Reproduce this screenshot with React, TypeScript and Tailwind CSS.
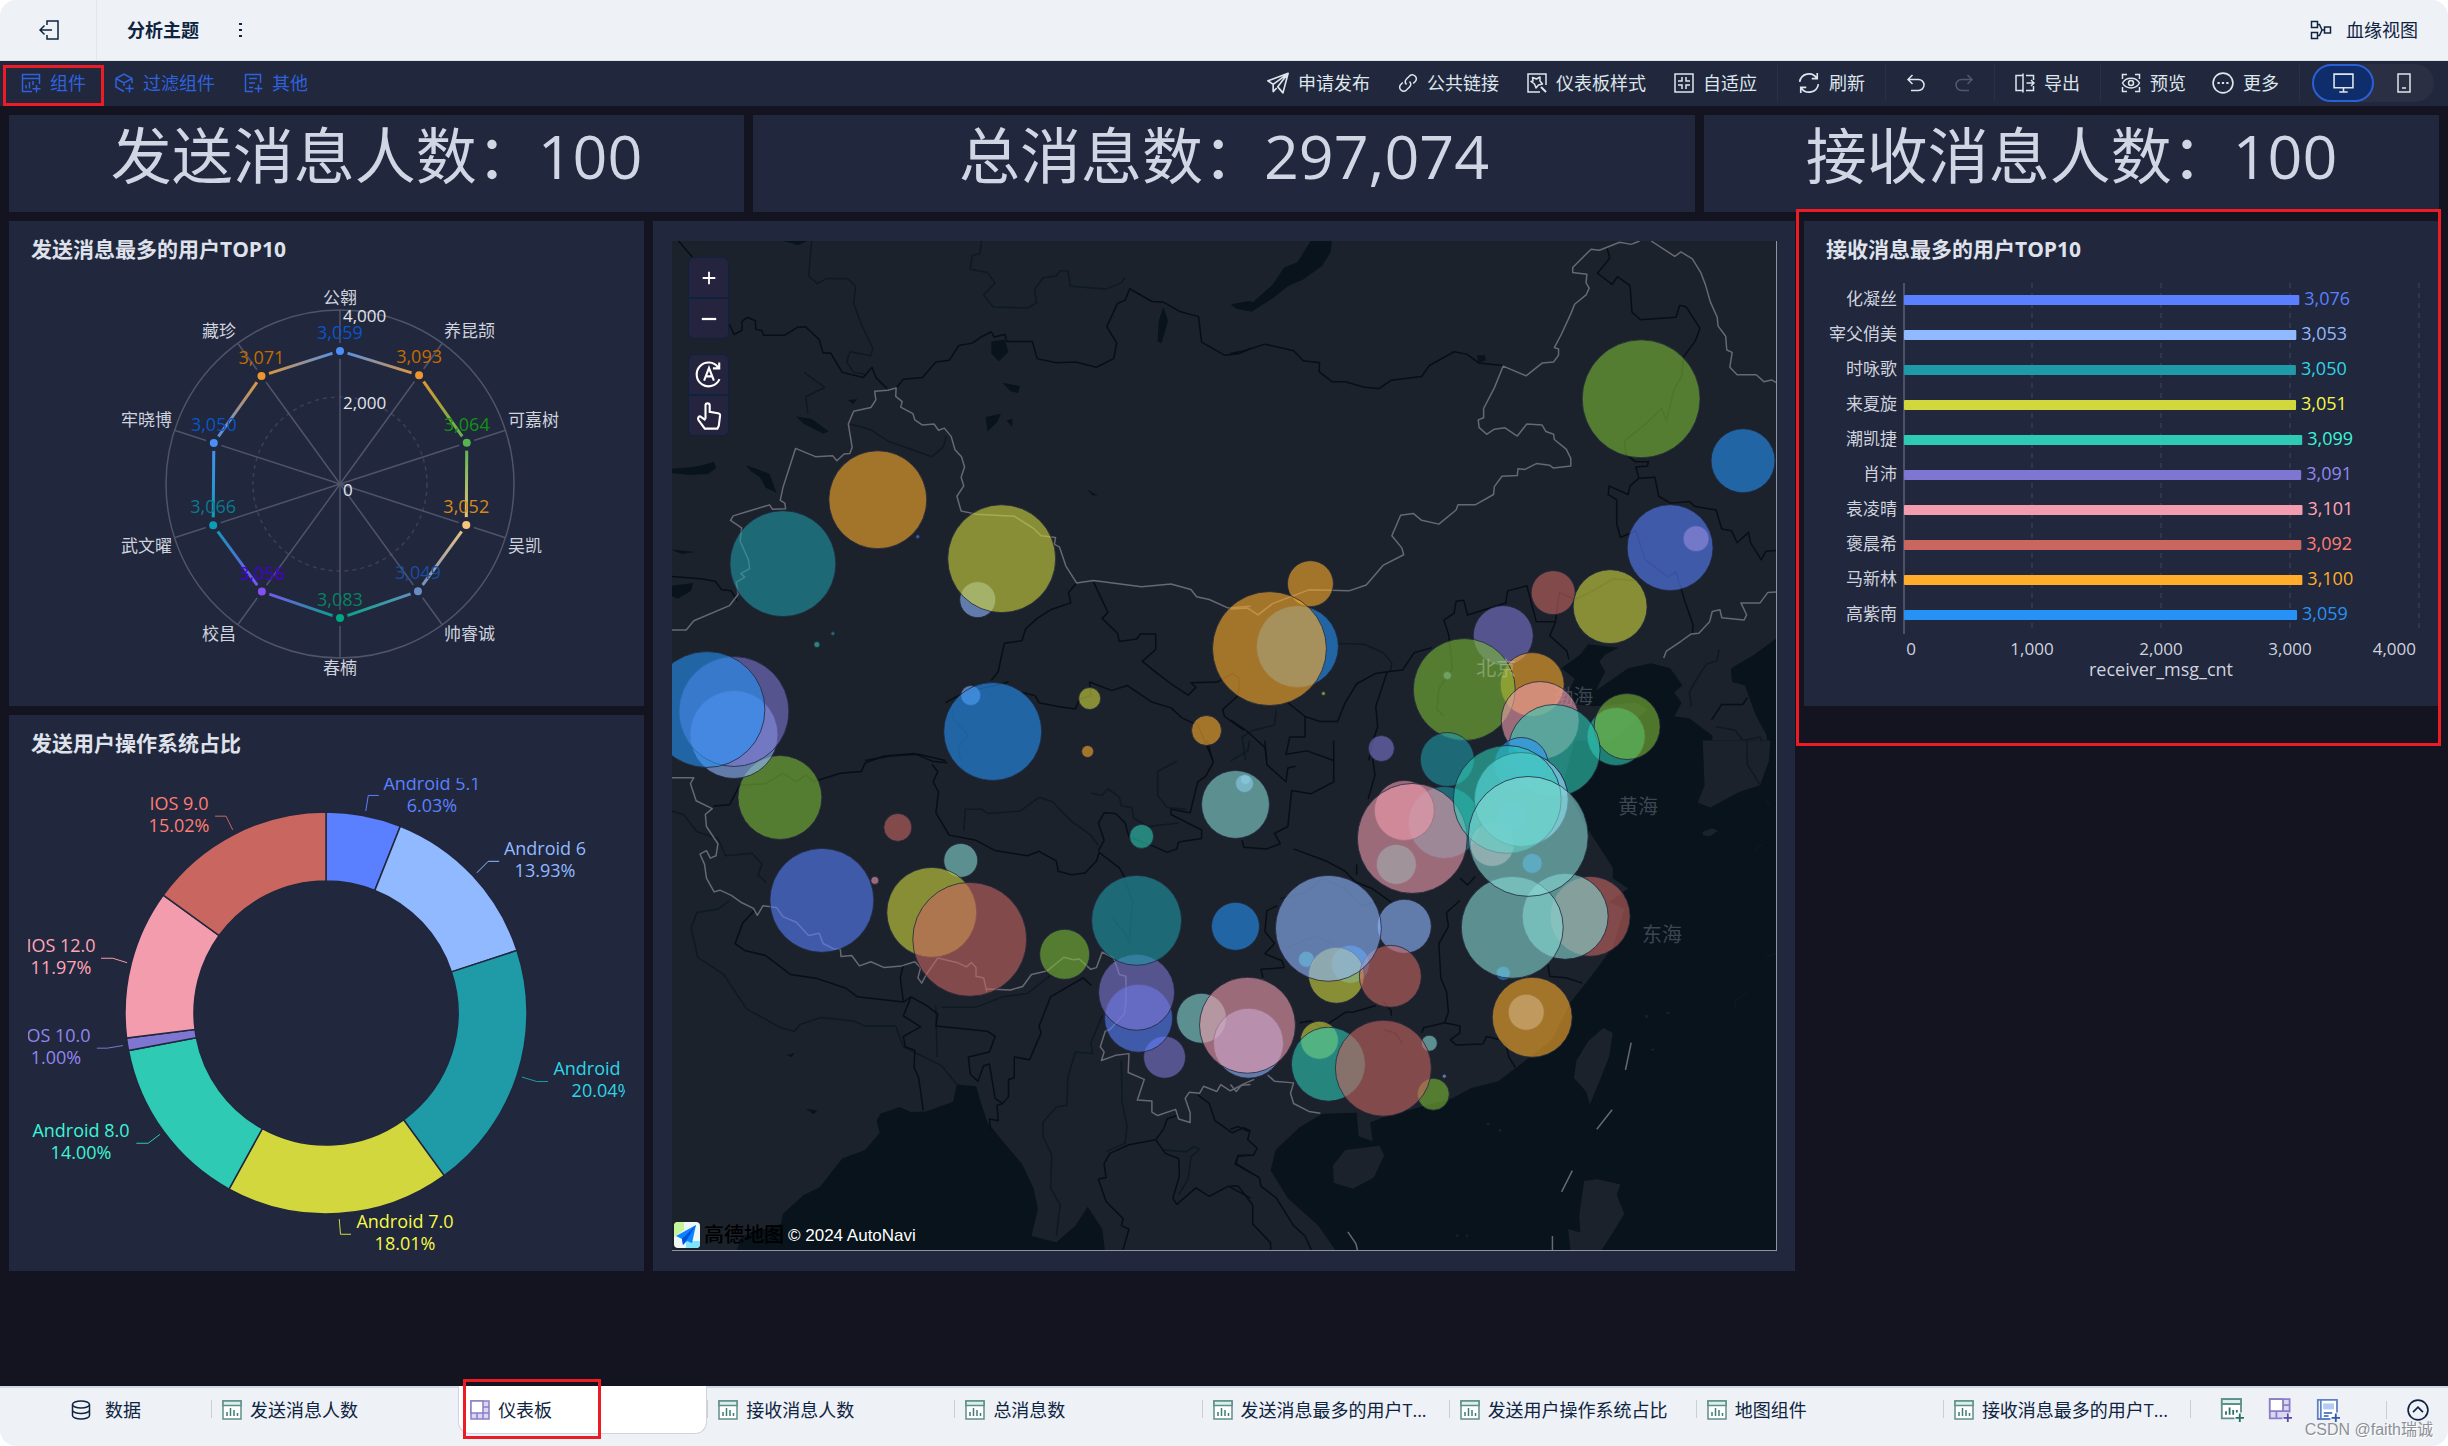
import React from "react";
import clsx from "clsx";

const C = {
  indigo: "#5a80ff",
  sky: "#91b9ff",
  teal: "#1f9aa7",
  yellow: "#d1d73d",
  mint: "#2fcab4",
  purple: "#7f76d2",
  pink: "#f29cad",
  red: "#c8665f",
  orange: "#ffad2b",
  blue: "#2692f5",
  green: "#7dba37",
  sage: "#87d9d3",
};

/* ---------- icons ---------- */

interface IconProps {
  className?: string;
  children?: React.ReactNode;
}

const Icon = ({ className = "size-5", children }: IconProps) => (
  <svg
    viewBox="0 0 20 20"
    className={clsx("shrink-0", className)}
    fill="none"
    stroke="currentColor"
    strokeWidth="1.5"
    aria-hidden="true"
  >
    {children}
  </svg>
);

const ExitIcon = () => (
  <Icon>
    <path d="M8 5V1h11v18H8v-4M13 10H1M5.500 5.500 1 10l4.500 4.500" />
  </Icon>
);

const LineageIcon = () => (
  <Icon className="w-[22px] h-5">
    <path d="M.500 1.500h6v6h-6zM.500 12.500h6v6h-6zM13.500 7h6v6h-6zM6.500 4.500h2l2.500 5.500h2.500M6.500 15.500h2L11 10" />
  </Icon>
);

const ComponentIcon = () => (
  <Icon>
    <path d="M18.500 11V1.500h-17v17H11M1.500 5.500h17M5 15.500V12M8.500 15.500V9M12 12V8M15.500 12v7.500M11.500 15.800h8" />
  </Icon>
);

const FilterIcon = () => (
  <Icon>
    <path d="M10 18.500 2 14V5.500L10 1l8 4.500V10M2 5.500l8 4.500 8-4.500M10 10v3M15.500 11.500v8M11.500 15.500h8" />
  </Icon>
);

const OtherIcon = () => (
  <Icon>
    <path d="M17.500 10V1.500h-15v17H10M6 5.500h8M6 10h6M6 14.500h4M15.500 11.500v8M11.500 15.500h8" />
  </Icon>
);

const SendIcon = () => (
  <Icon className="size-[22px]">
    <path d="M19.200 1.200.8 8l4.800 3.200zM19.200 1.200 14.500 19l-4.700-5.500zM5.600 11.200v6.600l3.200-3.300M5.600 11.200 19.200 1.200" strokeLinejoin="round" />
  </Icon>
);

const LinkIcon = () => (
  <Icon>
    <path d="M8.500 11.500a4 4 0 0 1 0-5.500l3.300-3.300a4 4 0 0 1 5.600 5.600l-2.200 2.200M11.500 8.500a4 4 0 0 1 0 5.500l-3.300 3.300a4 4 0 0 1-5.600-5.600l2.200-2.200" />
  </Icon>
);

const StyleIcon = () => (
  <Icon>
    <path d="M19 12V1H1v18h12" />
    <path d="m5.500 4.500 4 1.500L13 4v4l2.500 3-4 1-2.500 3-1.500-4L4 8.500l2-.500z" strokeLinejoin="round" />
    <path d="m14 14 5 5" strokeWidth="2" />
  </Icon>
);

const FitIcon = () => (
  <Icon>
    <path d="M1 1h18v18H1zM8 4v4H4M12 4v4h4M8 16v-4H4M12 16v-4h4" />
  </Icon>
);

const RefreshIcon = () => (
  <Icon className="size-[22px]">
    <path d="M1.500 9A8.500 8.500 0 0 1 17 5.500M17.500 1v5h-5M18.500 11A8.500 8.500 0 0 1 3 14.500M2.500 19v-5h5" />
  </Icon>
);

const UndoIcon = () => (
  <Icon>
    <path d="M6.500 2 2 6.500 6.500 11M2 6.500h10.500a5.500 5.500 0 0 1 0 11H5" />
  </Icon>
);

const RedoIcon = () => (
  <Icon>
    <path d="M13.500 2 18 6.500 13.500 11M18 6.500H7.500a5.500 5.500 0 0 0 0 11H15" />
  </Icon>
);

const ExportIcon = () => (
  <Icon>
    <path d="M8 2.500H1v15h7M8 .500v19M11 2.500h7.500V7M18.500 13v4.500H11M11.500 10h7.500M16 7l3 3-3 3" />
  </Icon>
);

const PreviewIcon = () => (
  <Icon>
    <path d="M6 1.500H1.500V6M14 1.500h4.500V6M6 18.500H1.500V14M14 18.500h4.500V14M1.500 10C5 3.500 15 3.500 18.500 10 15 16.500 5 16.500 1.500 10z" />
    <circle cx="10" cy="10" r="2.500" />
  </Icon>
);

const MoreIcon = () => (
  <Icon className="size-[22px]">
    <circle cx="10" cy="10" r="9" />
    <path d="M5 10h2M9 10h2M13 10h2" strokeWidth="2" />
  </Icon>
);

const MonitorIcon = () => (
  <Icon className="size-[21px]">
    <path d="M1 2h18v13H1zM10 15v4M6 19h8" />
  </Icon>
);

const PhoneIcon = () => (
  <Icon>
    <path d="M4 1h12v18H4zM8 15h4" />
  </Icon>
);

const DatabaseIcon = () => (
  <Icon>
    <ellipse cx="10" cy="4.500" rx="8.500" ry="3.500" />
    <path d="M1.500 4.500v11c0 2 4 3.500 8.500 3.500s8.500-1.500 8.500-3.500v-11M1.500 10c0 2 4 3.500 8.500 3.500s8.500-1.500 8.500-3.500" />
  </Icon>
);

const ChartIcon = () => (
  <Icon className="size-5 text-[#5f8f8b]">
    <path d="M1 1h18v18H1z" fill="#fff" />
    <path d="M1 1h18v4.500H1z" fill="#d9efec" />
    <path d="M5 16v-4M8.500 16V8M12 16v-6M15.500 16v-3" stroke="#3d7f78" />
  </Icon>
);

const BoardIcon = () => (
  <Icon className="size-5 text-[#8a7fc4]">
    <path d="M1 1h18v18H1z" fill="#dcd6f5" />
    <path d="M1 1h12v12H1z" fill="#fff" />
    <path d="M13 7h6M13 13h6M7 13v6M13 13v6" />
  </Icon>
);

const AddChartIcon = () => (
  <Icon className="size-6 text-[#5f8f8b]">
    <path d="M17.500 12V1h-16v16H12" fill="#fff" />
    <path d="M1.500 1h16v4h-16z" fill="#d9efec" />
    <path d="M5 14v-3M8 14V8M11 14v-4M14 12v-2M16.500 13v7M13 16.500h7" stroke="#2c6e66" />
  </Icon>
);

const AddBoardIcon = () => (
  <Icon className="size-6 text-[#8a7fc4]">
    <path d="M18 12V1H1.500v16H12" fill="#dcd6f5" />
    <path d="M1.500 1h11v10h-11z" fill="#fff" />
    <path d="M12.500 6H18M12.500 11H18M7 11v6" />
    <path d="M16.500 13v7M13 16.500h7" stroke="#5a4aa8" />
  </Icon>
);

const AddReportIcon = () => (
  <Icon className="size-6 text-[#5f82c4]">
    <path d="M17.500 12V1.500h-16v16H12" fill="#fff" />
    <path d="M6 4.500h9v5H6z" fill="#b4cbf2" stroke="none" />
    <path d="M4 1.500v16M6.500 12.500h7M6.500 15h4" />
    <path d="M16.500 13v7M13 16.500h7" stroke="#2f5bb0" />
  </Icon>
);

const CollapseIcon = () => (
  <Icon className="size-[22px]">
    <circle cx="10" cy="10" r="9" />
    <path d="m5.500 12 4.500-4.500 4.500 4.500" />
  </Icon>
);

/* ---------- shared pieces ---------- */

const Highlight = ({ className }: { className: string }) => (
  <span className={clsx("absolute z-10 border-3 border-[#ed1c24] pointer-events-none", className)} />
);

const Divider = () => <span className="w-px h-9 bg-[#2b3046]" />;

interface ToolButtonProps {
  icon: React.ReactNode;
  label: string;
}

const ToolButton = ({ icon, label }: ToolButtonProps) => (
  <button type="button" className="flex items-center gap-[9px] whitespace-nowrap">
    {icon}
    {label}
  </button>
);

const Panel = ({ title, children }: { title: string; children?: React.ReactNode }) => (
  <section className="bg-[#21273d]">
    <h2 className="h-14 px-[22px] flex items-center text-[21px] font-bold text-[#dfe2ea]">{title}</h2>
    {children}
  </section>
);

const Kpi = ({ label, value }: { label: string; value: string }) => (
  <section className="h-[97px] bg-[#21273d] flex items-center justify-center pb-4 text-[61px] leading-none text-[#d0d6e4] whitespace-nowrap">
    {label}：{value}
  </section>
);

/* ---------- radar ---------- */

const radarData = [
  { name: "公翱", value: 3059, color: "#4a8ff5", text: "#0a55c8", x: 331, y: 20, anchor: "middle" },
  { name: "养昆颉", value: 3093, color: "#ec962d", text: "#c26c00", x: 435, y: 53, anchor: "start" },
  { name: "可嘉树", value: 3064, color: "#56b450", text: "#149114", x: 499, y: 142, anchor: "start" },
  { name: "吴凯", value: 3052, color: "#f5c67c", text: "#d68a1a", x: 499, y: 268, anchor: "start" },
  { name: "帅睿诚", value: 3049, color: "#6a8cc4", text: "#1e4c9e", x: 435, y: 356, anchor: "start" },
  { name: "春楠", value: 3083, color: "#00a882", text: "#0a8262", x: 331, y: 390, anchor: "middle" },
  { name: "校昌", value: 3056, color: "#8450f5", text: "#4600d2", x: 227, y: 356, anchor: "end" },
  { name: "武文曜", value: 3066, color: "#0c9cb4", text: "#0a7a8e", x: 163, y: 268, anchor: "end" },
  { name: "牢晓博", value: 3050, color: "#4a8ff5", text: "#0a55c8", x: 163, y: 142, anchor: "end" },
  { name: "藏珍", value: 3071, color: "#ec962d", text: "#c26c00", x: 227, y: 53, anchor: "end" },
] as const;

const RadarChart = () => {
  const cx = 331;
  const cy = 207;
  const R = 174;
  const at = (i: number, r: number) => {
    const a = (i * Math.PI) / 5;
    return { x: cx + r * Math.sin(a), y: cy - r * Math.cos(a) };
  };
  const points = radarData.map((d, i) => at(i, (d.value / 4000) * R));

  return (
    <svg viewBox="0 0 635 429" className="block w-full" dominantBaseline="central">
      <g fill="none" stroke="#50546a" strokeWidth="1.500">
        <circle cx={cx} cy={cy} r={R} />
        <circle cx={cx} cy={cy} r={R / 2} strokeDasharray="4 4" stroke="#3b4056" />
        {radarData.map((d, i) => (
          <line key={d.name} x1={cx} y1={cy} x2={at(i, R).x} y2={at(i, R).y} />
        ))}
      </g>
      {radarData.map((d, i) => {
        const a = points[i];
        const n = (i + 1) % radarData.length;
        const b = points[n];
        return (
          <g key={d.name}>
            <linearGradient id={"edge" + i} gradientUnits="userSpaceOnUse" x1={a.x} y1={a.y} x2={b.x} y2={b.y}>
              <stop offset="0" stopColor={d.color} />
              <stop offset="1" stopColor={radarData[n].color} />
            </linearGradient>
            <line x1={a.x} y1={a.y} x2={b.x} y2={b.y} stroke={"url(#edge" + i + ")"} strokeWidth="3" />
          </g>
        );
      })}
      {radarData.map((d, i) => (
        <g key={d.name}>
          <circle cx={points[i].x} cy={points[i].y} r="6" fill={d.color} stroke="#21273d" strokeWidth="4" />
          <text x={points[i].x} y={points[i].y - 19} fontSize="18" fill={d.text} textAnchor="middle">
            {d.value.toLocaleString("en-US")}
          </text>
          <text x={d.x} y={d.y} fontSize="17" fill="#cfd3de" textAnchor={d.anchor}>
            {d.name}
          </text>
        </g>
      ))}
      <g fontSize="17" fill="#e2e5ec">
        <text x="334" y="38">4,000</text>
        <text x="334" y="125">2,000</text>
        <text x="334" y="212">0</text>
      </g>
    </svg>
  );
};

/* ---------- donut ---------- */

const osData = [
  { name: "Android 5.1", pct: 6.03, color: C.indigo, text: "#5a80ff", x: 423, y: 12, line: "M869 300 875 258H900" },
  { name: "Android 6", pct: 13.93, color: C.sky, text: "#91b9ff", x: 536, y: 77, line: "M1133 467 1160 436H1186" },
  { name: "Android 7.1", pct: 20.04, color: C.teal, text: "#2fd5e6", x: 593, y: 297, line: "M1240 1019 1275 1031H1302" },
  { name: "Android 7.0", pct: 18.01, color: C.yellow, text: "#f5fa46", x: 396, y: 450, line: "M806 1403 809 1444H834" },
  { name: "Android 8.0", pct: 14.0, color: C.mint, text: "#3cf5d7", x: 72, y: 359, line: "M380 1174 352 1198H324" },
  { name: "IOS 10.0", pct: 1.0, color: C.purple, text: "#9186f0", x: 47, y: 264, line: "M292 934 255 941H230" },
  { name: "IOS 12.0", pct: 11.97, color: C.pink, text: "#ffa5b6", x: 52, y: 174, line: "M302 710 268 698H240" },
  { name: "IOS 9.0", pct: 15.02, color: C.red, text: "#ff7d74", x: 170, y: 32, line: "M553 351 537 314H511" },
];

const DonutChart = () => {
  const cx = 317;
  const cy = 242;
  const R = 201;
  const r = 132;
  let acc = 0;
  const slices = osData.map((d) => {
    const a0 = (acc / 100) * Math.PI * 2;
    acc += d.pct;
    const a1 = (acc / 100) * Math.PI * 2;
    const p = (a: number, q: number) => `${cx + q * Math.sin(a)} ${cy - q * Math.cos(a)}`;
    return `M${p(a0, R)}A${R} ${R} 0 0 1 ${p(a1, R)}L${p(a1, r)}A${r} ${r} 0 0 0 ${p(a0, r)}Z`;
  });

  return (
    <svg viewBox="0 0 635 500" className="block w-full" dominantBaseline="central">
      <clipPath id="plot">
        <rect x="19" y="7" width="597" height="480" />
      </clipPath>
      {osData.map((d, i) => (
        <path key={d.name} d={slices[i]} fill={d.color} stroke="#21273d" strokeWidth="1.500" />
      ))}
      <g transform="translate(-9 -71) scale(.4209 .37)" fill="none">
        {osData.map((d) => (
          <path key={d.name} d={d.line} stroke={d.color} vectorEffect="non-scaling-stroke" />
        ))}
      </g>
      <g clipPath="url(#plot)" fontSize="18" textAnchor="middle">
        {osData.map((d) => (
          <g key={d.name} fill={d.text}>
            <text x={d.x} y={d.y}>{d.name}</text>
            <text x={d.x} y={d.y + 22}>{d.pct.toFixed(2)}%</text>
          </g>
        ))}
      </g>
    </svg>
  );
};

/* ---------- bars ---------- */

const receiverData = [
  { name: "化凝丝", value: 3076, color: C.indigo, text: "#5a80ff" },
  { name: "宰父俏美", value: 3053, color: C.sky, text: "#91b9ff" },
  { name: "时咏歌", value: 3050, color: C.teal, text: "#2fd5e6" },
  { name: "来夏旋", value: 3051, color: C.yellow, text: "#f5fa46" },
  { name: "潮凯捷", value: 3099, color: C.mint, text: "#3cf5d7" },
  { name: "肖沛", value: 3091, color: C.purple, text: "#9186f0" },
  { name: "袁凌晴", value: 3101, color: C.pink, text: "#ffa5b6" },
  { name: "褒晨希", value: 3092, color: C.red, text: "#ff7d74" },
  { name: "马新林", value: 3100, color: C.orange, text: "#ffad2b" },
  { name: "高紫南", value: 3059, color: C.blue, text: "#2692f5" },
];

const BarChart = () => (
  <svg viewBox="0 0 635 429" className="block w-full" dominantBaseline="central">
    {[228, 357, 486, 615].map((x) => (
      <line key={x} x1={x} x2={x} y1="6" y2="356" stroke="#373c51" strokeWidth="1.500" strokeDasharray="5 5" />
    ))}
    <line x1="100" x2="100" y1="6" y2="357" stroke="#5b6074" strokeWidth="1.500" />
    {receiverData.map((d, i) => {
      const y = 23 + i * 35;
      const w = d.value * 0.1285;
      return (
        <g key={d.name}>
          <text x="93" y={y - 2} fontSize="17" fill="#cfd3de" textAnchor="end">{d.name}</text>
          <rect x="100" y={y - 5} width={w} height="10" rx="1" fill={d.color} />
          <text x={105 + w} y={y - 2} fontSize="18" fill={d.text}>{d.value.toLocaleString("en-US")}</text>
        </g>
      );
    })}
    <g fontSize="17" fill="#cfd3de" textAnchor="middle">
      <text x="107" y="371">0</text>
      <text x="228" y="371">1,000</text>
      <text x="357" y="371">2,000</text>
      <text x="486" y="371">3,000</text>
      <text x="612" y="371" textAnchor="end">4,000</text>
      <text x="357" y="392" fontSize="18">receiver_msg_cnt</text>
    </g>
  </svg>
);

/* ---------- map ---------- */

// x, y, radius, colour; later entries lie on top
const bubbles: [number, number, number, string][] = [
  [205, 258, 49, C.orange],
  [110, 322, 53, C.teal],
  [305, 358, 18, C.sky],
  [329, 317, 54, C.yellow],
  [245, 295, 2, C.indigo],
  [160, 392, 2, C.teal],
  [144, 403, 3, C.mint],
  [107, 556, 42, C.green],
  [61, 493, 44, C.sky],
  [61, 470, 55, C.purple],
  [34, 468, 58, C.blue],
  [298, 454, 10, C.sky],
  [320, 490, 49, C.blue],
  [417, 457, 11, C.yellow],
  [534, 489, 15, C.orange],
  [415, 510, 6, C.orange],
  [625, 405, 41, C.blue],
  [638, 342, 23, C.orange],
  [597, 407, 57, C.orange],
  [651, 452, 2, C.yellow],
  [969, 157, 59, C.green],
  [1071, 219, 32, C.blue],
  [1024, 297, 13, C.pink],
  [998, 306, 43, C.indigo],
  [881, 351, 22, C.red],
  [938, 365, 37, C.yellow],
  [831, 394, 30, C.purple],
  [860, 443, 32, C.orange],
  [775, 434, 4, C.sky],
  [792, 448, 51, C.green],
  [944, 495, 29, C.mint],
  [955, 485, 33, C.green],
  [868, 479, 39, C.pink],
  [882, 509, 46, C.mint],
  [709, 507, 13, C.purple],
  [775, 518, 27, C.teal],
  [573, 538, 5, C.sky],
  [572, 542, 9, C.sky],
  [563, 563, 34, C.sage],
  [772, 581, 36, C.teal],
  [732, 569, 30, C.pink],
  [724, 623, 20, C.mint],
  [740, 597, 55, C.pink],
  [820, 603, 22, C.pink],
  [849, 523, 27, C.blue],
  [839, 575, 15, C.blue],
  [849, 558, 47, C.indigo],
  [849, 558, 47, C.sage],
  [860, 622, 10, C.blue],
  [835, 558, 54, C.mint],
  [918, 675, 40, C.red],
  [893, 675, 43, C.sage],
  [831, 732, 7, C.blue],
  [840, 686, 51, C.sage],
  [856, 595, 60, C.sage],
  [149, 659, 52, C.indigo],
  [225, 586, 14, C.red],
  [288, 619, 17, C.sage],
  [202, 639, 4, C.pink],
  [259, 671, 45, C.yellow],
  [297, 698, 57, C.red],
  [392, 713, 25, C.green],
  [492, 816, 21, C.purple],
  [466, 777, 34, C.indigo],
  [464, 751, 38, C.purple],
  [464, 679, 45, C.teal],
  [469, 595, 12, C.mint],
  [563, 685, 24, C.blue],
  [529, 777, 25, C.sage],
  [576, 802, 35, C.sky],
  [575, 784, 48, C.pink],
  [634, 718, 8, C.mint],
  [678, 723, 19, C.blue],
  [664, 734, 28, C.yellow],
  [732, 685, 27, C.sky],
  [718, 735, 31, C.red],
  [656, 687, 53, C.sky],
  [647, 799, 19, C.yellow],
  [656, 823, 37, C.mint],
  [761, 853, 16, C.green],
  [757, 802, 8, C.sage],
  [711, 827, 48, C.red],
  [772, 835, 2, C.sky],
  [854, 771, 18, C.sky],
  [860, 776, 40, C.orange],
];

interface TileProps {
  transform: string;
  sea?: string;
  land?: string;
  rivers?: string;
  regions?: string;
  border?: string;
}

const Tile = ({ transform, sea, land, rivers, regions, border }: TileProps) => (
  <g transform={transform} fill="none" strokeLinejoin="round">
    <path d={sea} fill="#08131b" />
    <path d={land} fill="#1b222b" />
    <path d={rivers} stroke="#0d1a23" strokeWidth="1.500" vectorEffect="non-scaling-stroke" />
    <path d={regions} stroke="#080e16" strokeWidth="1.500" vectorEffect="non-scaling-stroke" />
    <path d={border} stroke="#676873" strokeWidth="1.500" vectorEffect="non-scaling-stroke" />
  </g>
);

const MapButton = ({ label, children }: { label: string; children: React.ReactNode }) => (
  <button
    type="button"
    aria-label={label}
    className="size-[41px] flex items-center justify-center bg-[#25243f] border border-[#10203f] text-white first:rounded-t-md last:rounded-b-md"
  >
    {children}
  </button>
);

const MapPanel = () => (
  <section className="bg-[#21273d] flex p-5 pl-[19px] pr-[18px]">
    <div className="relative flex-1 overflow-hidden border-r border-b border-[#8f95a0] bg-[#1b222b]">
      <svg
        viewBox="-1 -1 1105 1010"
        preserveAspectRatio="xMidYMid slice"
        className="absolute inset-0 w-full h-full"
        dominantBaseline="central"
      >
        <Tile
          transform="translate(-22 -21) scale(.3827 .3444)"
          sea="M54 720 110 715 140 708 165 700 170 718 150 735 100 738 54 732ZM248 710 275 720 310 735 328 790 300 775 285 745 262 728ZM54 1060 110 1052 105 1075 70 1098 54 1090ZM380 568 420 575 465 612 450 618 400 590ZM890 350 925 345 935 380 910 408 890 385ZM1340 250 1352 290 1335 355 1325 350 1328 290ZM875 570 915 560 905 585 880 612ZM920 470 965 480 960 500 940 495ZM1518 242 1568 232V262L1530 255ZM54 955 115 962 80 968ZM930 580 945 575 945 598ZM1140 780 1168 798 1155 798ZM515 520 540 518 528 532ZM345 58 410 58 385 70Z"
          rivers="M420 58 412 160 435 182 460 167 515 168 535 190 530 240 550 300 580 370 575 392 520 380 512 410 530 440 560 445M400 440 455 484 405 510 410 560M865 58 860 95 840 100 835 140 880 150 900 180 870 215 895 250 985 253 1008 238 1003 200 1025 165 1060 160 1070 145 1090 145 1097 190 1190 198 1230 180 1238 165M520 590 575 607 620 640 735 685 765 655 772 625M790 1420 792 1450 830 1495 803 1530 810 1568"
          regions="M72 58 108 105M205 300 217 330 238 318 238 292 252 280 273 290 274 315 290 318 294 332 350 332 385 308 405 308 440 345 450 384 470 384 500 440 555 455 578 425 588 455 617 487M640 487 660 460 710 455 745 410 780 405 805 362 840 355 862 338 890 322 897 337 926 330 930 350 997 350 1010 400 1060 412 1110 410 1165 425 1210 400 1218 355 1192 307 1220 240 1240 230 1252 197 1310 234 1340 236 1385 264 1432 278 1440 352 1500 390 1540 385 1568 370M54 1033 130 1040 168 1047 185 1072 210 1075 225 1103M1113 1052 1092 1080 1098 1110 1045 1130 1010 1155 980 1185 970 1220 924 1227 908 1310 890 1335M1157 1048 1195 1138 1180 1155 1220 1198 1225 1222 1270 1215 1280 1200 1320 1200 1320 1245 1285 1280 1330 1320 1360 1345 1405 1378 1425 1355 1412 1342 1480 1340 1520 1315 1540 1330 1535 1380 1495 1420 1500 1440 1550 1480M770 1400 820 1370 900 1350 935 1340M970 1370 1005 1380 1015 1400 1060 1410 1110 1418 1120 1390 1150 1380 1147 1340 1205 1365 1245 1350 1310 1398 1360 1415 1390 1445 1430 1465 1470 1568M560 1568 625 1555 700 1550 770 1568"
          border="M54 1189H92L112 1162 205 1118 228 1085 223 1050 245 1035 235 1025 258 1010 255 985 233 930 237 892 208 870 215 857 250 845 310 825 318 838 352 836 350 820 338 812 345 775 378 661 430 685 475 682 486 697 505 677 520 676 526 658 516 590 530 553 575 542 588 520 585 495 620 492 641 485 640 510 657 525 653 541 685 560 690 578 710 593 740 590 752 608 767 602 785 626 795 665 812 685 820 715 811 745 818 770 800 800 811 843 850 852 950 858 1000 893 1020 915 1058 920 1055 940 1068 947 1085 1003 1113 1052 1157 1045 1283 1063 1360 1055 1412 1071 1427 1092 1460 1100 1510 1125 1568 1120"
        />
        <Tile
          transform="translate(558 -21) scale(.3827 .3444)"
          sea="M210 58H265L262 90 240 130 190 170 150 190 110 225 55 264 0 245 60 235 110 185 140 135 175 120ZM1432 1205 1370 1260 1310 1300 1305 1340 1345 1350 1370 1430 1400 1490 1415 1568H1432ZM1432 1205V1568H1250L1265 1500 1200 1445 1160 1440 1180 1400 1160 1370 1182 1350 1150 1300 1100 1285 1040 1300 955 1365 980 1310 965 1280 980 1260 1015 1240 935 1230 915 1260 865 1300 900 1330 880 1380 850 1400 950 1410 1060 1400 1090 1420 1030 1480 930 1568H1432ZM645 390 665 390 668 405 648 412Z"
          land="M1432 1210 1370 1260 1308 1300 1312 1340 1345 1350 1375 1440 1400 1490 1412 1568H1265L1260 1500 1268 1450 1215 1440 1165 1440 1180 1400 1165 1370 1185 1355 1200 1300 1432 1130Z"
          rivers="M1278 1245 1272 1278 1245 1288 1220 1330 1200 1370 1205 1410M283 1228 350 1230 400 1255 422 1285 418 1310M40 1568 30 1500 60 1480 115 1465 120 1420M1270 1470 1320 1480 1340 1510 1385 1500 1390 1510"
          regions="M0 385 35 378 90 358 165 377 190 406 233 412 232 438 265 467 300 467 350 483 388 487 420 463 500 452 520 420 585 380 618 387 650 413 712 420M985 80 992 108 960 152 998 184 1012 162 1045 188 1050 265 1072 287 1165 280 1175 245 1192 250 1228 312 1215 350 1185 395 1180 450 1160 490 1140 580 1128 545 1075 600 1030 640 1035 680 1060 700 1093 700 1090 712 1060 715 1068 748 1110 745 1120 800 1150 820 1200 815 1215 830 1270 840 1285 895 1310 900 1325 935 1355 905 1360 935 1388 985 1400 960 1432 957M1068 748 1045 770 1040 795 990 770 988 795 1010 810 1010 880 1020 920 1060 900 1085 985 1145 1035 1165 1020 1190 1110 1210 1175 1208 1200M1060 1045 1000 1040 940 1080 900 1100 860 1080 850 1165 800 1165 775 1060 725 1075 720 1110 620 1145 610 1102 590 1105 585 1140 558 1160 570 1200 575 1240 580 1300 545 1360 540 1420 560 1440M850 1165 835 1205 880 1250 885 1275M527 1240 480 1255 450 1305 410 1310 380 1410 385 1470 370 1520 362 1568M410 1310 380 1315 330 1345 300 1400 280 1455 235 1455 195 1440 150 1400M0 1450 40 1480 90 1530 95 1568M195 1440 195 1500 155 1500 145 1550 200 1540 270 1568M1258 1450 1285 1405H1340L1352 1385"
          border="M0 1128 45 1125 72 1145 110 1112 205 1072 310 1075 355 1058 400 1000 453 970 448 950 422 915 445 855 478 850 500 870 545 881 590 840 595 825H640L688 795 690 772 710 742 750 740 752 720 770 722 800 705 835 710 845 718 890 712V690L878 663 847 635 845 620 825 612 815 593 775 590 750 625 718 601 690 605 670 620 650 600 648 578 662 572V545L690 485 713 422 773 450 815 413 845 410 858 390V372L847 368 865 330 890 270 900 242 930 215 938 195 930 180 932 155 895 150V135L943 82 965 85 1018 62 1048 68 1070 58M1100 58 1162 103 1178 90 1208 110 1230 150 1242 185 1255 235 1273 280 1275 305 1295 335 1298 375 1312 382 1306 425 1325 447H1375L1395 467 1415 462 1432 472M1133 1270 1140 1250 1180 1220 1205 1200 1225 1198 1253 1165 1260 1135 1280 1130 1285 1153 1343 1160 1350 1145 1335 1110H1385L1405 1080 1432 1078"
        />
        <Tile
          transform="translate(-22 499) scale(.3827 .3444)"
          sea="M600 1085 650 1065 680 1080 720 1078 790 1050 800 1000 850 1005 862 1050 880 1110 920 1165 970 1230 1000 1300 1012 1360 995 1440 1060 1458 1110 1410 1142 1355 1180 1420 1188 1490H220L240 1440 340 1405 345 1375 400 1320 440 1300 500 1215 560 1190 598 1140 590 1105ZM405 1070 435 1075 425 1086ZM355 915 375 908 368 920Z"
          rivers="M205 465 175 490 120 500 105 545 122 630 190 680 250 780 340 835 375 845 390 825 445 805 530 815 560 830 640 830 660 890 760 945 800 1000M54 205 85 215 120 265 175 285 195 335 265 328 290 360 280 390 302 414M818 263 822 200 865 200 880 212 965 205 1015 165 1050 178 1100 235 1150 275 1170 305M745 770 748 920M1180 800 1150 880 1155 910 1110 905 1090 980 1088 1060 1060 1065 1025 1110 1025 1150 1048 1205 1045 1300 1070 1350 1060 1440M1230 930 1232 1050 1245 1120 1240 1170 1190 1195M1152 153 1180 160 1195 140 1225 165 1230 190 1258 195 1262 225 1300 250 1380 240M1375 60 1325 90 1325 160 1350 195 1400 200M1205 515 1240 560 1250 590 1260 470 1240 410M1340 1190 1400 1195 1420 1180 1435 1188 1412 1210 1405 1275 1380 1320M760 775 850 775 920 745 985 735 1065 665"
          regions="M163 190 205 187 232 130 300 125 345 95 380 120 405 100 425 120 495 95 550 90 560 65 610 45 690 38 735 60 775 65M735 70 750 90 738 120 752 150 745 210 780 275 850 290 900 320 985 335 1015 322 1060 350 1065 380 1100 390 1135 385 1165 350 1172 325 1225 370 1240 400M272 492 240 530 220 590 245 610 300 625 365 680 435 692 510 720 540 745 660 760 652 690 660 650M660 760 680 745 720 770 750 795 745 830 880 845 900 860 885 905 830 920 835 970 855 990 870 945 885 940 900 1040 920 1055 935 1035 935 985 950 980 950 920 990 928 1020 850 1015 830 1045 745 1130 690 1152 712M680 745 660 800 705 832 660 860 665 890 690 900 688 950 700 980 712 1075M920 1055 905 1060 908 1105 885 1100 888 1130M1375 1090 1350 1100 1340 1130 1320 1160 1250 1175 1200 1200 1185 1230 1190 1270 1170 1275 1190 1340 1235 1390 1230 1410 1250 1420 1232 1490M1320 1160 1345 1200 1380 1215 1382 1265 1365 1330 1375 1348 1425 1300 1460 1325 1510 1295 1568 1330M1430 1030 1460 1055 1475 1105 1520 1140 1550 1125 1568 1135M1170 320 1185 290 1170 240 1185 210 1215 212 1240 240 1250 280 1320 310 1350 325 1375 315 1380 295 1440 285 1440 260 1360 215 1360 200 1410 210 1430 120 1450 105 1470 65 1455 0M1568 1205 1535 1208 1530 1230 1568 1255"
          border="M54 108H112L103 125 118 175 160 198 142 215 145 250 175 300 170 335 155 342 145 320 128 330 140 360 145 400 165 440 180 435 210 450 235 470 268 488 278 508 293 480 328 485 345 512 380 528 412 567 440 560 450 590 480 607 495 605 497 628 525 625 545 655 575 643 610 660 655 655 690 643 705 660 698 690 708 705 720 680 750 632 800 645 825 658 838 645 850 660V685L870 690 878 730M878 722 940 725 972 715 995 680 1035 670 1080 630 1105 637 1120 635 1150 665 1165 660 1180 615 1210 632 1225 680 1242 685V760L1238 795 1200 840 1188 845 1175 890 1185 905 1178 930 1215 915 1250 910 1248 965 1290 985 1272 1045 1310 1048V1080L1325 1090 1372 1072 1380 1100 1410 1110V1082L1397 1040 1408 1022 1435 1025 1445 1005 1480 1020 1490 1000 1515 1018 1545 1002 1568 1000"
        />
        <Tile
          transform="translate(558 499) scale(.3827 .3444)"
          sea="M1432 0V1490H280L230 1410 150 1330 105 1250 118 1190 180 1125 240 1085 330 1082 335 1150 372 1165 365 1110 400 1095 480 1070 580 1040 630 1010 700 990 760 940 840 870 890 760 940 690 1000 600 1030 490 990 470 1040 430 1000 400 1000 370 930 250 870 120 900 0Z"
          land="M1235 0H1412L1408 60 1385 130 1330 150 1255 195 1222 180 1240 130ZM975 835 1000 850 990 920 965 990 940 1058 930 1020 898 980 905 930 935 875ZM300 1190 390 1178 402 1205 375 1270 320 1303 270 1285 268 1235ZM925 1280 960 1275 1020 1290 1010 1320 1030 1375 1000 1430 965 1490H890L883 1420 915 1430 912 1380ZM1235 265 1260 255 1275 262 1255 278 1235 275ZM1083 800l6 -4 4 6-6 6ZM1140 790h8v5h-8ZM1100 896h8v5h-8ZM670 1112h8v6h-8ZM702 1130h7v6h-7ZM590 1436h6v6h-6ZM615 1436h6v6h-6Z"
          rivers="M1350 0 1352 70 1385 128M1400 175 1410 190M1318 778 1322 755 1350 732M1370 320 1392 300M1400 630 1428 618M130 460 200 440 240 400 300 430 340 480 380 470M150 600 220 570 270 590M50 0 45 30 0 60"
          regions="M90 0 95 70 145 120 150 80 170 75M270 0V120L210 155 160 145 150 250 115 270 130 300 95 315 35 310 30 290M165 315 250 350 300 380 325 410 370 430 420 470M330 360V390M360 170 378 100 370 40M122 480 95 495 90 555 115 590 90 620 135 640 140 660 80 665 85 690M600 465 565 500 570 540 545 590 550 690 565 730 570 790 560 820 505 835 500 850M560 820 600 830 600 850 575 870 590 885 660 882 670 860 700 868 720 880 728 920 745 950M400 760 420 785 420 800M400 840 430 850 450 880M180 820 210 815 240 835 300 790 320 790 380 770M640 395 620 420 600 400M830 650 835 685 880 690 920 705M0 1130 20 1122 50 1138 45 1160 70 1185 60 1205 20 1205 12 1230 75 1270 80 1295 120 1330 165 1410 195 1440 215 1490M0 1295 20 1295 58 1350V1405L105 1460V1490"
          border="M0 1000 15 1020 30 1000 62 985M97 972 115 990 165 995 157 1025 165 1055 205 1078 235 1083M1048 878 1033 957M998 1073 958 1130M894 1250 866 1312M842 1440V1490M307 1428 328 1462 334 1490"
        />
        <g fontSize="20" textAnchor="middle" fill="#3c4653">
          <text x="901" y="455">渤海</text>
          <text x="966" y="565">黄海</text>
          <text x="990" y="693">东海</text>
        </g>
        <g fillOpacity=".6" stroke="#21273d" strokeOpacity=".8">
          {bubbles.map(([x, y, r, color], i) => (
            <circle key={i} cx={x} cy={y} r={r} fill={color} />
          ))}
        </g>
        <text x="824" y="427" fontSize="20" textAnchor="middle" fill="#c3cfae" fillOpacity=".45">
          北京
        </text>
      </svg>

      <div className="absolute left-4 top-4 flex flex-col gap-[15px]">
        <div className="flex flex-col">
          <MapButton label="放大">
            <Icon className="size-[18px]">
              <path d="M10 3v14M3 10h14" strokeWidth="2" />
            </Icon>
          </MapButton>
          <MapButton label="缩小">
            <Icon className="size-[18px]">
              <path d="M2 10h16" strokeWidth="2.500" />
            </Icon>
          </MapButton>
        </div>
        <div className="flex flex-col">
          <MapButton label="自动">
            <Icon className="size-[28px]">
              <path d="M17.500 13A8.500 8.500 0 1 1 16.500 4.500M17.300 1v4.300h-4.500M6.500 14 10 5l3.500 9M7.800 11h4.400" />
            </Icon>
          </MapButton>
          <MapButton label="拖动">
            <Icon className="size-[28px]">
              <path d="M7.500 12V2.500a1.500 1.500 0 0 1 3 0V7l6 1c1 .2 1.500.8 1.400 1.800L17 17l-1 2H7l-4.500-6c-1-2 .5-3.500 2-2.200L7.500 13" />
            </Icon>
          </MapButton>
        </div>
      </div>

      <div className="absolute left-0.5 bottom-0.5 h-[26px] flex items-center gap-1 whitespace-nowrap">
        <svg viewBox="0 0 26 26" className="size-[26px]" aria-hidden="true">
          <rect width="26" height="26" rx="4" fill="#eef6f6" />
          <path d="M0 4a4 4 0 0 1 4-4h6v8L0 15z" fill="#c4f59a" />
          <path d="M12 19h14v3a4 4 0 0 1-4 4H12z" fill="#7fe3fb" />
          <path d="M22 3 2 14l6 3 1 6 4-4 5 2z" fill="#0a84ff" />
          <path d="M22 3 8 17l1 6 3-4z" fill="#0050d8" />
        </svg>
        <span className="text-[20px] font-medium text-black">高德地图</span>
        <span className="pt-0.5 text-[17px] text-white font-['Liberation_Sans',sans-serif]">© 2024 AutoNavi</span>
      </div>
    </div>
  </section>
);

/* ---------- footer ---------- */

const tabs = [
  { label: "发送消息人数" },
  { label: "仪表板", active: true },
  { label: "接收消息人数" },
  { label: "总消息数" },
  { label: "发送消息最多的用户T..." },
  { label: "发送用户操作系统占比" },
  { label: "地图组件" },
  { label: "接收消息最多的用户T..." },
];

const Footer = () => (
  <footer className="relative h-[60px] bg-[#eef1f6] border-t-2 border-[#d3d8e2] rounded-b-2xl flex text-[#0f2440]">
    <button type="button" className="w-[211px] h-11 pl-[71px] flex items-center gap-3.5">
      <DatabaseIcon />
      数据
    </button>
    <nav className="flex-1 flex">
      {tabs.map((t) => (
        <div
          key={t.label}
          className={clsx(
            "relative flex-1 min-w-0",
            t.active && "-mt-0.5 h-[48px] pt-0.5 bg-white border border-t-0 border-[#cfd4de] rounded-b-xl",
          )}
        >
          {!t.active && <span className="absolute left-0 top-3 w-px h-[18px] bg-[#c9ced8]" />}
          <button type="button" className="h-11 pl-[11px] flex items-center gap-2 whitespace-nowrap">
            {t.active ? <BoardIcon /> : <ChartIcon />}
            {t.label}
          </button>
          {t.active && <Highlight className="left-1 -top-[7px] w-[138px] h-[60px]" />}
        </div>
      ))}
    </nav>
    <div className="relative w-[258px] h-11 pl-[30px] pr-[19px] flex items-center">
      <span className="absolute left-0 top-3 w-px h-[18px] bg-[#c9ced8]" />
      <div className="flex gap-6">
        <button type="button" aria-label="添加组件"><AddChartIcon /></button>
        <button type="button" aria-label="添加仪表板"><AddBoardIcon /></button>
        <button type="button" aria-label="添加报告"><AddReportIcon /></button>
      </div>
      <span className="ml-auto mr-5 w-px h-[18px] bg-[#c9ced8]" />
      <button type="button" aria-label="收起"><CollapseIcon /></button>
    </div>
    <span className="absolute right-[15px] bottom-1 text-[16px] leading-6 text-[#8d9096] font-['Liberation_Sans','Noto_Sans_CJK_SC',sans-serif] [text-shadow:1px_1px_0_#fff]">
      CSDN @faith瑞诚
    </span>
  </footer>
);

/* ---------- page ---------- */

export default function App() {
  return (
    <div className="min-h-screen flex flex-col bg-white text-[18px] leading-6 font-['Open_Sans','Noto_Sans_CJK_SC',sans-serif]">
      <header className="h-[61px] bg-[#eef1f6] border-b border-[#dfe3ea] rounded-t-2xl flex items-center text-[#0f2440]">
        <button type="button" aria-label="退出" className="w-[97px] h-full pl-[39px] flex items-center border-r border-[#e1e5ec]">
          <ExitIcon />
        </button>
        <h1 className="ml-[30px] font-bold">分析主题</h1>
        <button type="button" aria-label="菜单" className="ml-[40px]">
          <svg viewBox="0 0 3 14" className="w-[3px] h-[14px]" fill="currentColor">
            <path d="M0 0h3v2H0zM0 6h3v2H0zM0 12h3v2H0z" />
          </svg>
        </button>
        <button type="button" className="ml-auto mr-[30px] flex items-center gap-3.5">
          <LineageIcon />
          血缘视图
        </button>
      </header>

      <div className="h-[45px] bg-[#21273d] flex items-center text-[#dde6ea]">
        <div className="relative self-stretch flex items-center gap-7 pl-[21px] pb-0.5 text-[#2f62dc]">
          <ToolButton icon={<ComponentIcon />} label="组件" />
          <ToolButton icon={<FilterIcon />} label="过滤组件" />
          <ToolButton icon={<OtherIcon />} label="其他" />
          <Highlight className="left-[3px] top-1 w-[101px] h-[41px]" />
        </div>
        <div className="ml-auto mr-3.5 pb-0.5 flex items-center gap-5">
          <div className="flex items-center gap-7">
            <ToolButton icon={<SendIcon />} label="申请发布" />
            <ToolButton icon={<LinkIcon />} label="公共链接" />
            <ToolButton icon={<StyleIcon />} label="仪表板样式" />
            <ToolButton icon={<FitIcon />} label="自适应" />
          </div>
          <Divider />
          <ToolButton icon={<RefreshIcon />} label="刷新" />
          <Divider />
          <div className="flex items-center gap-7">
            <button type="button" aria-label="撤销"><UndoIcon /></button>
            <button type="button" aria-label="重做" className="text-[#515870]"><RedoIcon /></button>
          </div>
          <Divider />
          <ToolButton icon={<ExportIcon />} label="导出" />
          <Divider />
          <div className="flex items-center gap-[26px]">
            <ToolButton icon={<PreviewIcon />} label="预览" />
            <ToolButton icon={<MoreIcon />} label="更多" />
          </div>
          <Divider />
          <div className="-ml-2 flex rounded-full bg-[#2a2f43]">
            <button
              type="button"
              aria-label="桌面端"
              className="w-[62px] h-[38px] flex items-center justify-center rounded-full bg-[#0f2d6b] border-2 border-[#2b5fd6]"
            >
              <MonitorIcon />
            </button>
            <button type="button" aria-label="移动端" className="w-[60px] h-[38px] flex items-center justify-center">
              <PhoneIcon />
            </button>
          </div>
        </div>
      </div>

      <main className="flex-1 bg-[#13141f] p-[9px] flex flex-col gap-[9px]">
        <div className="grid grid-cols-[735fr_942fr_735fr] gap-[9px]">
          <Kpi label="发送消息人数" value="100" />
          <Kpi label="总消息数" value="297,074" />
          <Kpi label="接收消息人数" value="100" />
        </div>
        <div className="grid grid-cols-[635fr_1142fr_635fr] gap-[9px]">
          <div className="flex flex-col gap-[9px]">
            <Panel title="发送消息最多的用户TOP10">
              <RadarChart />
            </Panel>
            <Panel title="发送用户操作系统占比">
              <DonutChart />
            </Panel>
          </div>
          <MapPanel />
          <div className="relative self-start">
            <Panel title="接收消息最多的用户TOP10">
              <BarChart />
            </Panel>
            <Highlight className="-left-2 -right-0.5 -top-3 -bottom-10" />
          </div>
        </div>
      </main>

      <Footer />
    </div>
  );
}
